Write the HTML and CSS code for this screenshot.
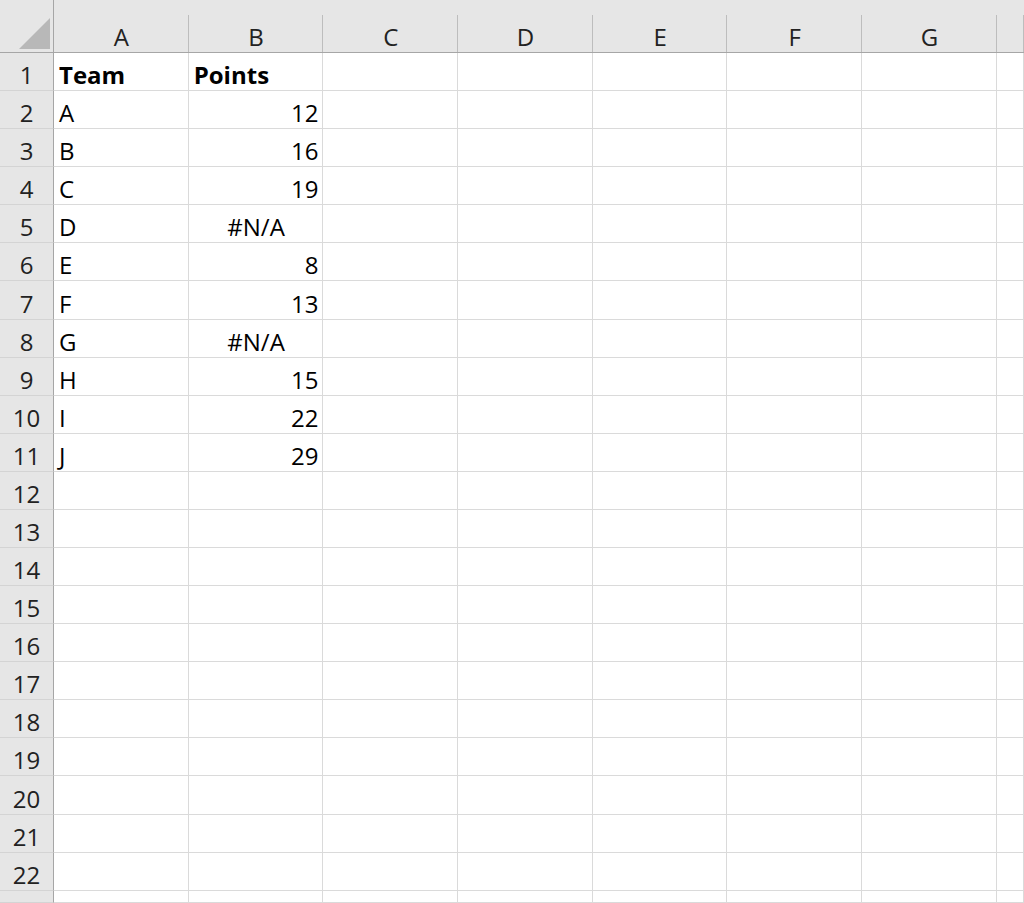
FILE: index.html
```html
<!DOCTYPE html>
<html lang="en">
<head>
    <meta charset="UTF-8">
    <title>Sheet1</title>
    <link rel="stylesheet" href="styles.css">
</head>
<body>
    <div class="sheet" id="sheet">
        <div class="corner">
            <svg width="32" height="32" viewBox="0 0 32 32"><polygon points="0,31 31,31 31,0" fill="#b8b8b8"/></svg>
        </div>
    </div>

    <script>
        const sheet = document.getElementById('sheet');
        const cols = ['A', 'B', 'C', 'D', 'E', 'F', 'G', ''];
        const data = [
            ['Team', 'Points'],
            ['A', 12], ['B', 16], ['C', 19], ['D', '#N/A'], ['E', 8],
            ['F', 13], ['G', '#N/A'], ['H', 15], ['I', 22], ['J', 29]
        ];

        function cell(cls, text) {
            const div = document.createElement('div');
            div.className = cls;
            if (text !== undefined) div.textContent = text;
            sheet.appendChild(div);
            return div;
        }

        cols.forEach(c => cell('col-head', c));

        for (let r = 1; r <= 23; r++) {
            cell('row-head', r <= 22 ? r : '');
            const row = data[r - 1] || [];
            cols.forEach((c, i) => {
                const v = row[i];
                let cls = 'cell';
                if (r === 1 && v !== undefined) cls += ' bold';
                else if (typeof v === 'number') cls += ' num';
                else if (v === '#N/A') cls += ' err';
                cell(cls, v);
            });
        }
    </script>
</body>
</html>
```

FILE: styles.css
```css
body, html {
    margin: 0;
    padding: 0;
    height: 100%;
    overflow: hidden;
    background-color: #fff;
    font-family: 'Open Sans', 'Noto Sans', sans-serif;
}
.sheet {
    display: grid;
    grid-template-columns: 54px repeat(7, 134.7px) 1fr;
    grid-template-rows: 53px repeat(22, 38.09px) 1fr;
    height: 903px;
    width: 1024px;
    font-size: 24px;
    line-height: 31px;
}
.corner {
    background-color: #e6e6e6;
    border-right: 1px solid #a6a6a6;
    border-bottom: 1px solid #a6a6a6;
    box-sizing: border-box;
    display: flex;
    align-items: flex-end;
    justify-content: flex-end;
    padding: 0 2px 2px 0;
}
.col-head {
    background: linear-gradient(#bdbdbd, #bdbdbd) right bottom / 1px 37px no-repeat, #e6e6e6;
    border-bottom: 1px solid #a6a6a6;
    box-sizing: border-box;
    display: flex;
    align-items: flex-end;
    justify-content: center;
    color: #222;
}
.row-head {
    background-color: #e6e6e6;
    border-right: 1px solid #a6a6a6;
    border-bottom: 1px solid #d4d4d4;
    box-sizing: border-box;
    display: flex;
    align-items: flex-end;
    justify-content: center;
    color: #222;
}
.cell {
    border-right: 1px solid #dadada;
    border-bottom: 1px solid #dadada;
    box-sizing: border-box;
    display: flex;
    align-items: flex-end;
    padding: 0 4px 0 5px;
    color: #000;
    white-space: nowrap;
}
.bold {
    font-weight: bold;
}
.num {
    justify-content: flex-end;
}
.err {
    justify-content: center;
}
```
